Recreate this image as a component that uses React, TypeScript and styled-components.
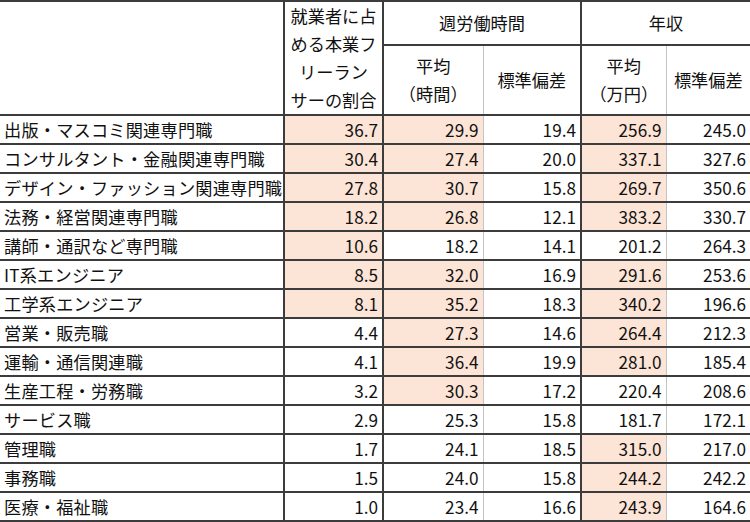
import React from 'react';
import styled, { createGlobalStyle } from 'styled-components';

const GlobalStyle = createGlobalStyle`
	html, body {
		margin: 0;
		padding: 0;
		background: #ffffff;
	}
	body {
		font-family: 'Noto Sans CJK JP', 'Noto Sans', sans-serif;
		color: #111;
	}
`;

const DARK = '2px solid #3c3c3c';
const THIN = '1px solid #c4c4c4';

const Table = styled.table`
	width: 750px;
	border-collapse: collapse;
	table-layout: fixed;
	font-size: 17.2px;
	border-top: ${DARK};
`;

const Cell = styled.td<{ $thin?: boolean; $last?: boolean }>`
	padding: 0 5px;
	border-bottom: ${DARK};
	border-right: ${(p) => (p.$last ? 'none' : p.$thin ? THIN : DARK)};
	white-space: nowrap;
	line-height: 20px;
	box-sizing: border-box;
`;

const HeadCell = styled(Cell)`
	text-align: center;
	vertical-align: middle;
	line-height: 28px;
`;

const LabelCell = styled(Cell)`
	text-align: left;
	padding-left: 4px;
	letter-spacing: 0.2px;
`;

const NumCell = styled(Cell)<{ $hl?: boolean }>`
	text-align: right;
	padding-right: 4px;
	background: ${(p) => (p.$hl ? '#fce4d6' : '#ffffff')};
`;

const HeadRow1 = styled.tr`
	height: 44px;
`;

const HeadRow2 = styled.tr`
	height: 69px;
`;

const BodyRow = styled.tr`
	height: 29px;
`;

type Row = {
	name: string;
	v: [number, number, number, number, number];
	hl: [boolean, boolean, boolean, boolean, boolean];
};

const rows: Row[] = [
	{ name: '出版・マスコミ関連専門職', v: [36.7, 29.9, 19.4, 256.9, 245.0], hl: [true, true, false, true, false] },
	{ name: 'コンサルタント・金融関連専門職', v: [30.4, 27.4, 20.0, 337.1, 327.6], hl: [true, true, false, true, false] },
	{ name: 'デザイン・ファッション関連専門職', v: [27.8, 30.7, 15.8, 269.7, 350.6], hl: [true, true, false, true, false] },
	{ name: '法務・経営関連専門職', v: [18.2, 26.8, 12.1, 383.2, 330.7], hl: [true, true, false, true, false] },
	{ name: '講師・通訳など専門職', v: [10.6, 18.2, 14.1, 201.2, 264.3], hl: [true, false, false, false, false] },
	{ name: 'IT系エンジニア', v: [8.5, 32.0, 16.9, 291.6, 253.6], hl: [true, true, false, true, false] },
	{ name: '工学系エンジニア', v: [8.1, 35.2, 18.3, 340.2, 196.6], hl: [true, true, false, true, false] },
	{ name: '営業・販売職', v: [4.4, 27.3, 14.6, 264.4, 212.3], hl: [false, true, false, true, false] },
	{ name: '運輸・通信関連職', v: [4.1, 36.4, 19.9, 281.0, 185.4], hl: [false, true, false, true, false] },
	{ name: '生産工程・労務職', v: [3.2, 30.3, 17.2, 220.4, 208.6], hl: [false, true, false, false, false] },
	{ name: 'サービス職', v: [2.9, 25.3, 15.8, 181.7, 172.1], hl: [false, false, false, false, false] },
	{ name: '管理職', v: [1.7, 24.1, 18.5, 315.0, 217.0], hl: [false, false, false, true, false] },
	{ name: '事務職', v: [1.5, 24.0, 15.8, 244.2, 242.2], hl: [false, false, false, true, false] },
	{ name: '医療・福祉職', v: [1.0, 23.4, 16.6, 243.9, 164.6], hl: [false, false, false, true, false] },
];

// the "平均" columns get a light divider on their right side
const thinAfter = (i: number) => i === 1 || i === 3;

export default function App() {
	return (
		<>
			<GlobalStyle />
			<Table>
				<colgroup>
					<col style={{ width: 284 }} />
					<col style={{ width: 99 }} />
					<col style={{ width: 100 }} />
					<col style={{ width: 98 }} />
					<col style={{ width: 85 }} />
					<col style={{ width: 84 }} />
				</colgroup>
				<thead>
					<HeadRow1>
						<HeadCell rowSpan={2} />
						<HeadCell rowSpan={2}>
							就業者に占
							<br />
							める本業フ
							<br />
							リーラン
							<br />
							サーの割合
						</HeadCell>
						<HeadCell colSpan={2}>週労働時間</HeadCell>
						<HeadCell colSpan={2} $last>
							年収
						</HeadCell>
					</HeadRow1>
					<HeadRow2>
						<HeadCell $thin>
							平均
							<br />
							（時間）
						</HeadCell>
						<HeadCell>標準偏差</HeadCell>
						<HeadCell $thin>
							平均
							<br />
							（万円）
						</HeadCell>
						<HeadCell $last>標準偏差</HeadCell>
					</HeadRow2>
				</thead>
				<tbody>
					{rows.map((r) => (
						<BodyRow key={r.name}>
							<LabelCell>{r.name}</LabelCell>
							{r.v.map((n, i) => (
								<NumCell key={i} $hl={r.hl[i]} $thin={thinAfter(i)} $last={i === 4}>
									{n.toFixed(1)}
								</NumCell>
							))}
						</BodyRow>
					))}
				</tbody>
			</Table>
		</>
	);
}
